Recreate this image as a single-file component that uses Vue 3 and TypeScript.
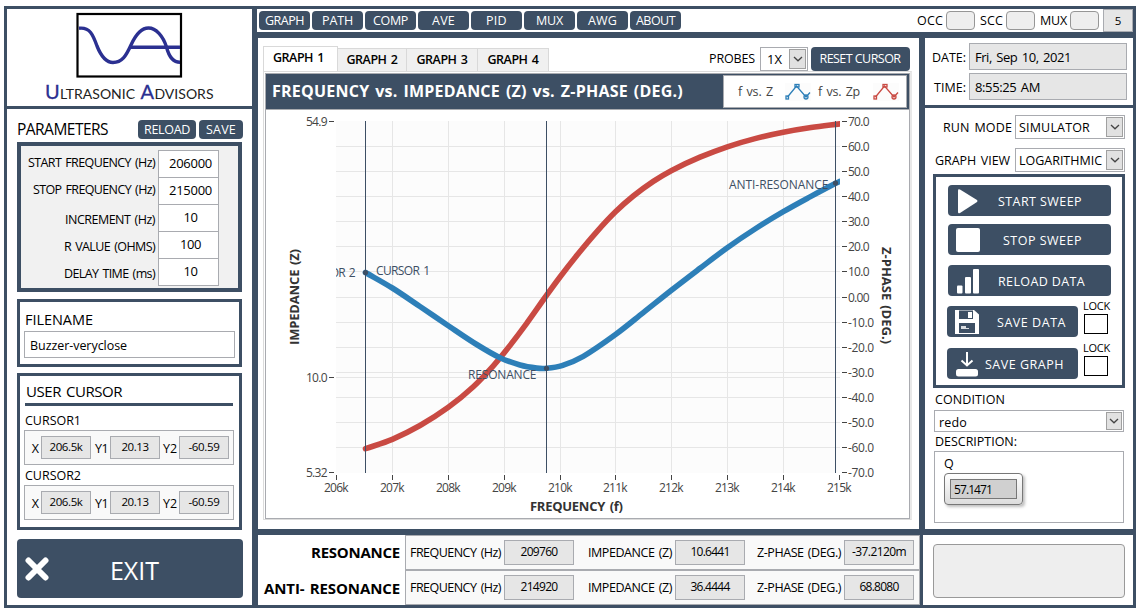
<script setup lang="ts">
type Point = [number, number]

// Spreads or tightens the letters of an element so its text takes the given width.
const vFit = {
  mounted(el: HTMLElement, binding: { value: number }) {
    const range = document.createRange()
    range.selectNodeContents(el)
    const width = range.getBoundingClientRect().width
    const count = (el.textContent ?? '').trim().length
    if (count > 1) el.style.letterSpacing = `${(binding.value - width) / count}px`
  },
}

const menu = [
  { name: 'GRAPH', w: 39 },
  { name: 'PATH', w: 31 },
  { name: 'COMP', w: 35 },
  { name: 'AVE', w: 23 },
  { name: 'PID', w: 21 },
  { name: 'MUX', w: 27 },
  { name: 'AWG', w: 29 },
  { name: 'ABOUT', w: 39 },
]
const lamps = [
  { name: 'OCC', w: 26 },
  { name: 'SCC', w: 23 },
  { name: 'MUX', w: 27 },
]
const params = [
  { label: 'START FREQUENCY (Hz)', w: 127, value: '206000', vw: 43, low: false },
  { label: 'STOP FREQUENCY (Hz)', w: 122, value: '215000', vw: 43, low: false },
  { label: 'INCREMENT (Hz)', w: 90, value: '10', vw: 14, low: true },
  { label: 'R VALUE (OHMS)', w: 91, value: '100', vw: 21, low: true },
  { label: 'DELAY TIME (ms)', w: 91, value: '10', vw: 14, low: true },
]
const cursors = ['CURSOR1', 'CURSOR2']
const readings = [
  { axis: 'X', value: '206.5k', w: 33, aw: 8 },
  { axis: 'Y1', value: '20.13', w: 27, aw: 13 },
  { axis: 'Y2', value: '-60.59', w: 31, aw: 14 },
]
const tabs = ['GRAPH 1', 'GRAPH 2', 'GRAPH 3', 'GRAPH 4']
const results = [
  { name: 'RESONANCE', w: 89, f: '209760', z: '10.6441', p: '-37.2120m', pw: 54 },
  { name: 'ANTI- RESONANCE', w: 136, f: '214920', z: '36.4444', p: '68.8080', pw: 39 },
]
const actions = [
  { id: 'play', name: 'START SWEEP', w: 84, lock: false },
  { id: 'stop', name: 'STOP SWEEP', w: 79, lock: false },
  { id: 'bars', name: 'RELOAD DATA', w: 87, lock: false },
  { id: 'disk', name: 'SAVE DATA', w: 69, lock: true },
  { id: 'down', name: 'SAVE GRAPH', w: 79, lock: true },
]

const gridX = [392, 448, 504, 560, 615, 671, 727, 783]
const gridY = [146, 171, 196, 221, 246, 271, 297, 322, 347, 372, 377, 397, 422, 447]
const ticksX = [336, 392, 448, 504, 560, 615, 671, 727, 783, 839].map((x, i) => ({ x, label: `${206 + i}k` }))
const ticksY = [121, 146, 171, 196, 221, 246, 271, 297, 322, 347, 372, 397, 422, 447, 472].map((y, i) => {
  const v = 70 - i * 10
  return { y, label: v === 0 ? '0.00' : v.toFixed(1) }
})
const ticksZ = [
  { y: 121, label: '54.9' },
  { y: 377, label: '10.0' },
  { y: 472, label: '5.32' },
]

const phase: Point[] = [
  [365.5, 448.7], [392.3, 439.3], [420, 425.5], [448.3, 407.3], [473.3, 386.7], [493.3, 365.8],
  [507, 349.3], [526.7, 323.3], [545, 297.5], [560, 277], [578, 254], [596.7, 231.8], [615.5, 211.8],
  [633.3, 196], [653.3, 181.4], [671.7, 170.4], [700, 157.2], [727.3, 146.8], [755, 138.6], [783.3, 132.3],
  [811, 127.6], [840, 123.9],
]
const impedance: Point[] = [
  [365.5, 272.5], [392.3, 288], [420, 306.5], [448.3, 325.7], [476.7, 344.5], [500, 357.7], [520, 365],
  [536.7, 368.1], [546.7, 368.3], [562, 365.6], [583.3, 356.3], [615.5, 334.5], [643.3, 312.6], [671.7, 290],
  [700, 268.3], [727.3, 247.7], [755, 229], [783.3, 211.7], [810, 196.9], [835.7, 183.3], [840, 181.3],
]

// Cubic through the points, with tangents taken from the slope around each one.
function smooth(p: Point[]): string {
  const slope = p.map((_, i) => {
    const a = p[Math.max(i - 1, 0)]
    const b = p[Math.min(i + 1, p.length - 1)]
    return (b[1] - a[1]) / (b[0] - a[0])
  })
  let d = `M${p[0][0]} ${p[0][1]}`
  for (let i = 0; i < p.length - 1; i++) {
    const [x0, y0] = p[i]
    const [x1, y1] = p[i + 1]
    const h = (x1 - x0) / 3
    d += `C${x0 + h} ${y0 + slope[i] * h} ${x1 - h} ${y1 - slope[i + 1] * h} ${x1} ${y1}`
  }
  return d
}
const phasePath = smooth(phase)
const impedancePath = smooth(impedance)
</script>

<template>
  <div class="frame">
    <aside class="left">
      <div class="brand">
        <svg width="245" height="97" viewBox="7 9 245 97">
          <rect x="77.5" y="14" width="103.5" height="62.5" fill="#fff" stroke="#000" stroke-width="2.2" />
          <g fill="none" stroke="#2b3091" stroke-width="3.4">
            <path d="M79 28.3C90 27 93 35 97 46C101 56 106 62.5 113 62.5C122 62.5 126 56 131 45C136 34 141 28 148.500 28C156 28 163 36 166.500 47C169 57 173 62.300 180 62.300" />
            <path d="M130 47.300H180" />
          </g>
          <g font-family="Lato, 'Open Sans', sans-serif" fill="#222">
            <text x="45" y="99" fill="#2b3091" stroke="#2b3091" stroke-width=".3" font-size="20">U</text>
            <text x="60" y="99" textLength="75" font-size="14">LTRASONIC</text>
            <text x="140.500" y="99" fill="#2b3091" stroke="#2b3091" stroke-width=".3" font-size="20">A</text>
            <text x="154.500" y="99" textLength="59" font-size="14">DVISORS</text>
          </g>
        </svg>
      </div>

      <div class="stack">
        <div class="params-head">
          <span v-fit="91" class="heading">PARAMETERS</span>
          <button class="btn reload"><span v-fit="46">RELOAD</span></button>
          <button class="btn save"><span v-fit="30">SAVE</span></button>
        </div>
        <div class="params">
          <div v-for="p in params" :key="p.label" class="param">
            <span v-fit="p.w" :class="p.low ? 'low' : 'high'">{{ p.label }}</span>
            <div class="param-value" :class="{ raised: !p.low }"><span v-fit="p.vw">{{ p.value }}</span></div>
          </div>
        </div>

        <div class="file">
          <span v-fit="68" class="heading">FILENAME</span>
          <div class="file-input"><span v-fit="97">Buzzer-veryclose</span></div>
        </div>

        <div class="user-cursor">
          <div class="cursor-title"><span v-fit="96" class="heading">USER CURSOR</span></div>
          <template v-for="c in cursors" :key="c">
            <div class="cursor-name"><span v-fit="56">{{ c }}</span></div>
            <div class="cursor-row">
              <template v-for="r in readings" :key="r.axis">
                <span class="axis"><span v-fit="r.aw">{{ r.axis }}</span></span>
                <div class="field reading"><span v-fit="r.w">{{ r.value }}</span></div>
              </template>
            </div>
          </template>
        </div>

        <button class="btn exit">
          <svg width="24" height="24" viewBox="0 0 24 24">
            <path d="M3.500 3.500L20.500 20.500M20.500 3.500L3.500 20.500" stroke="#fff" stroke-width="6" stroke-linecap="round" />
          </svg>
          <span v-fit="49">EXIT</span>
        </button>
      </div>
    </aside>

    <div class="right">
      <header class="toolbar">
        <button v-for="m in menu" :key="m.name" class="btn menu"><span v-fit="m.w">{{ m.name }}</span></button>
        <div class="lamps">
          <template v-for="l in lamps" :key="l.name">
            <span class="lamp-name"><span v-fit="l.w">{{ l.name }}</span></span>
            <i class="lamp"></i>
          </template>
          <div class="field count">5</div>
        </div>
      </header>

      <div class="middle">
        <main class="main">
          <div class="tabbar">
            <div v-for="(t, i) in tabs" :key="t" class="tab" :class="{ active: i === 0 }"><span v-fit="51">{{ t }}</span></div>
            <div class="tools">
              <span v-fit="46" class="probes">PROBES</span>
              <div class="select probe-select">
                <span v-fit="15">1X</span>
                <i class="arrow"><svg width="10" height="6" viewBox="0 0 10 6"><path d="M1 1L5 4.800L9 1" /></svg></i>
              </div>
              <button class="btn reset"><span v-fit="81">RESET CURSOR</span></button>
            </div>
          </div>
          <div class="pane">
            <div class="graph">
              <div class="graph-head">
                <span v-fit="411" class="graph-title">FREQUENCY vs. IMPEDANCE (Z) vs. Z-PHASE (DEG.)</span>
                <div class="legend">
                  <span v-fit="35">f vs. Z</span>
                  <svg width="26" height="18" viewBox="0 0 26 18" class="blue">
                    <path d="M2.500 14L11.500 3L21 14L25 9.500" /><rect x="1" y="13" width="2.500" height="3" /><rect x="10" y="1.500" width="4" height="2.500" /><circle cx="21" cy="14" r="2" />
                  </svg>
                  <span v-fit="42">f vs. Zp</span>
                  <svg width="26" height="18" viewBox="0 0 26 18" class="red">
                    <path d="M2.500 14L11.500 3L21 14L25 9.500" /><rect x="1" y="13" width="2.500" height="3" /><rect x="10" y="1.500" width="4" height="2.500" /><circle cx="21" cy="14" r="2" />
                  </svg>
                </div>
              </div>
              <svg class="plot" width="643" height="408" viewBox="266 110 643 408">
                <defs>
                  <clipPath id="area"><rect x="336" y="121" width="504" height="352" /></clipPath>
                </defs>
                <rect x="336" y="121" width="504" height="352" fill="#fcfcfc" />
                <g fill="#e6e6e6">
                  <rect v-for="x in gridX" :key="x" :x="x" y="121" width="1" height="352" />
                  <rect v-for="y in gridY" :key="y" x="336" :y="y" width="504" height="1" />
                </g>
                <g fill="#444">
                  <rect v-for="t in ticksX" :key="t.x" :x="t.x" y="475" width="1" height="5" />
                  <rect v-for="t in ticksY" :key="t.y" x="842" :y="t.y" width="5" height="1" />
                  <rect v-for="t in ticksZ" :key="t.y" x="329" :y="t.y" width="5" height="1" />
                </g>
                <g class="scale">
                  <text v-for="t in ticksX" :key="t.x" :x="t.x - 12" y="492" textLength="24.500">{{ t.label }}</text>
                  <text v-for="t in ticksY" :key="t.y" x="848" :y="t.y + 5" :textLength="t.label.length > 4 ? 26 : 21.500">{{ t.label }}</text>
                  <text v-for="t in ticksZ" :key="t.y" x="306" :y="t.y + 5" textLength="21.500">{{ t.label }}</text>
                </g>
                <g clip-path="url(#area)" fill="none" stroke-width="5.600" stroke-linecap="round">
                  <path :d="phasePath" stroke="#c94a43" />
                  <path :d="impedancePath" stroke="#2d7fb8" />
                </g>
                <g fill="#3d4f64">
                  <rect x="365" y="121" width="1" height="352" />
                  <rect x="546" y="121" width="1" height="352" />
                  <rect x="835" y="121" width="1" height="352" />
                  <circle cx="365.500" cy="272.500" r="2.600" />
                  <circle cx="546.500" cy="368.300" r="2.600" />
                  <circle cx="835.500" cy="183" r="2.600" />
                </g>
                <g class="notes" clip-path="url(#area)">
                  <text x="303" y="277" textLength="52.500">CURSOR 2</text>
                  <text x="376" y="275" textLength="54">CURSOR 1</text>
                  <text x="468" y="379" textLength="68.500">RESONANCE</text>
                  <text x="729" y="189" textLength="99.500">ANTI-RESONANCE</text>
                </g>
                <g class="titles">
                  <text x="530" y="511" textLength="93">FREQUENCY (f)</text>
                  <text transform="translate(299 345) rotate(-90)" textLength="96">IMPEDANCE (Z)</text>
                  <text transform="translate(882 247) rotate(90)" textLength="97">Z-PHASE (DEG.)</text>
                </g>
              </svg>
            </div>
          </div>
        </main>

        <aside class="side">
          <div class="clock">
            <div class="clock-row"><span class="clock-label"><span v-fit="34">DATE:</span></span><div class="field stamp"><span v-fit="96">Fri, Sep 10, 2021</span></div></div>
            <div class="clock-row"><span class="clock-label"><span v-fit="32">TIME:</span></span><div class="field stamp"><span v-fit="65">8:55:25 AM</span></div></div>
          </div>
          <div class="controls">
            <div class="mode">
              <span class="mode-label"><span v-fit="69">RUN MODE</span></span>
              <div class="select"><span v-fit="71">SIMULATOR</span><i class="arrow"><svg width="10" height="6" viewBox="0 0 10 6"><path d="M1 1L5 4.800L9 1" /></svg></i></div>
            </div>
            <div class="mode second">
              <span class="mode-label view"><span v-fit="75">GRAPH VIEW</span></span>
              <div class="select"><span v-fit="83">LOGARITHMIC</span><i class="arrow"><svg width="10" height="6" viewBox="0 0 10 6"><path d="M1 1L5 4.800L9 1" /></svg></i></div>
            </div>
            <div class="actions">
              <div v-for="a in actions" :key="a.id" class="action" :class="a.id">
                <button class="btn act">
                  <svg width="26" height="26" viewBox="0 0 26 26" fill="#fff">
                    <path v-if="a.id === 'play'" d="M3 2.500Q3 .5 5 1.500L22 12Q23 13 22 14L5 25Q3 26 3 24Z" />
                    <rect v-else-if="a.id === 'stop'" x="1" y="1" width="24" height="24" rx="2" />
                    <g v-else-if="a.id === 'bars'">
                      <rect x="2" y="17.500" width="5.500" height="8" rx="1" /><rect x="10" y="9" width="6" height="16.500" rx="1" /><rect x="18" y="1" width="6" height="24.500" rx="1" />
                    </g>
                    <g v-else-if="a.id === 'disk'">
                      <path d="M1 1H20L25 5.500V25H1Z" />
                      <path d="M5 1.500V10H19V1.500ZM5 14V24H21V14Z" fill="#3d4f64" />
                      <rect x="14" y="3" width="4" height="6" /><path d="M7 17H12V19H15V20H7Z" opacity=".8" />
                    </g>
                    <g v-else>
                      <rect x="2" y="18" width="22" height="7.500" rx="2.500" />
                      <path d="M13 1V14M7.500 9.500L13 14.500L18.500 9.500" fill="none" stroke="#fff" stroke-width="2" />
                    </g>
                  </svg>
                  <span v-fit="a.w">{{ a.name }}</span>
                </button>
                <div v-if="a.lock" class="lock"><span v-fit="27">LOCK</span><i></i></div>
              </div>
            </div>
            <div class="line condition"><span v-fit="70">CONDITION</span></div>
            <div class="select wide"><span v-fit="28">redo</span><i class="arrow"><svg width="10" height="6" viewBox="0 0 10 6"><path d="M1 1L5 4.800L9 1" /></svg></i></div>
            <div class="line"><span v-fit="82">DESCRIPTION:</span></div>
            <div class="description">
              <span class="q">Q</span>
              <div class="gauge"><div class="gauge-face"><span v-fit="38">57.1471</span></div></div>
            </div>
          </div>
        </aside>
      </div>

      <footer class="bottom">
        <div class="results">
          <div v-for="r in results" :key="r.name" class="result">
            <span class="result-name"><span v-fit="r.w">{{ r.name }}</span></span>
            <div class="result-row">
              <span class="rl"><span v-fit="91">FREQUENCY (Hz)</span></span>
              <div class="field out"><span v-fit="37">{{ r.f }}</span></div>
              <span class="rl rz"><span v-fit="84">IMPEDANCE (Z)</span></span>
              <div class="field out"><span v-fit="39">{{ r.z }}</span></div>
              <span class="rl rp"><span v-fit="84">Z-PHASE (DEG.)</span></span>
              <div class="field out"><span v-fit="r.pw">{{ r.p }}</span></div>
            </div>
          </div>
        </div>
        <div class="message"><div class="message-box"></div></div>
      </footer>
    </div>
  </div>
</template>

<style>
html, body { background: #fff; overflow: hidden; }
</style>

<style scoped>
* { box-sizing: border-box; }
.frame {
  display: flex;
  gap: 5px;
  width: 1132px;
  height: 602px;
  margin: 6px 0 0 4px;
  padding: 3px;
  background: #3d4f64;
  color: #000;
  font: 12.5px/16px "Open Sans", "Noto Sans", sans-serif;
  white-space: nowrap;
  word-spacing: 1.5px;
}
svg { display: block; flex: none; }
.btn {
  display: flex;
  align-items: center;
  justify-content: center;
  padding: 0;
  border: 0;
  border-radius: 4px;
  background: #3d4f64;
  color: #fff;
  font: 500 12.5px/16px "Open Sans", "Noto Sans", sans-serif;
  white-space: nowrap;
}
.field {
  display: flex;
  align-items: center;
  justify-content: center;
  border: 1px solid #a9abb0;
  background: #e6e6e6;
}
.heading { font-size: 15px; line-height: 20px; }

/* left column */
.left { display: flex; flex-direction: column; gap: 3px; width: 245px; flex: none; }
.brand { height: 97px; background: #fff; }
.stack { flex: 1; padding: 11px 9px 0 10px; background: #fff; }
.params-head { display: flex; height: 22px; }
.params-head .heading { width: 121px; font-size: 15.5px; line-height: 18px; }
.params-head .btn { height: 19px; }
.reload { width: 58px; }
.save { width: 44px; margin-left: 3px; }
.params { width: 225px; height: 150px; padding: 4px 0 0 0; border: 4px solid #3d4f64; background: #f1f1f1; }
.param { display: flex; align-items: center; justify-content: flex-end; height: 27px; padding-right: 19px; }
.param .low { margin-top: 4px; }
.param .high { margin-bottom: 2px; }
.param-value {
  display: flex;
  align-items: center;
  justify-content: center;
  width: 61px;
  height: 28px;
  margin: 0 0 0 3px;
  padding: 0 0 2px 4px;
  border: 1px solid #a9abb0;
  background: #fff;
  font-size: 13px;
}
.param-value.raised { padding-bottom: 1px; }
.file { width: 225px; height: 68px; margin-top: 7px; padding: 8px 4px 0 4px; border: 3px solid #3d4f64; }
.file .heading { display: block; padding-left: 1px; font-size: 14.5px; }
.file-input { width: 211px; height: 27px; margin-top: 1px; padding: 6px 5px 4px; border: 1px solid #a9abb0; }
.user-cursor { width: 225px; height: 157px; margin-top: 6px; padding: 5px 4px 0; border: 3px solid #3d4f64; }
.cursor-title { width: 208px; height: 25px; margin-left: 1px; padding-left: 1px; border-bottom: 3px solid #3d4f64; }
.cursor-title .heading { font-size: 15px; }
.cursor-name { height: 24px; padding: 7px 0 0 1px; }
.cursor-row + .cursor-name { height: 20px; padding-top: 3px; }
.cursor-row { display: flex; align-items: center; width: 210px; height: 35px; border: 1px solid #a9abb0; background: #f9f9f9; }
.axis { display: flex; justify-content: flex-end; width: 16px; padding: 2px 2px 0 0; }
.reading + .axis { width: 19px; }
.reading { width: 50px; height: 23px; padding-bottom: 1px; font-size: 11.5px; }
.exit { width: 226px; height: 59px; margin-top: 9px; padding-left: 8px; justify-content: flex-start; }
.exit span { margin: 2px 0 0 61px; font-size: 25px; line-height: 32px; font-weight: 500; }

/* right block */
.right { display: flex; flex-direction: column; gap: 6px; width: 876px; }
.toolbar { display: flex; align-items: center; gap: 2px; height: 23px; padding-left: 2px; background: #fff; }
.menu { width: 51px; height: 19px; }
.lamps { display: flex; align-items: center; margin-left: auto; }
.lamp-name { width: 29px; }
.lamp { width: 29px; height: 19px; margin-right: 5px; border: 1px solid #969696; border-radius: 4px; background: #eee; }
.lamp + .lamp-name { width: 26px; }
.lamp-name:nth-of-type(3) { width: 30px; }
.count { width: 30px; height: 23px; margin-left: -1px; font-size: 11.5px; }
.middle { display: flex; gap: 6px; height: 491px; padding-left: 1px; }
.main { width: 661px; padding: 8px 0 0 5px; background: #fff; }
.tabbar { display: flex; align-items: flex-end; height: 25px; }
.tab {
  display: flex;
  align-items: center;
  justify-content: center;
  width: 71px;
  height: 23px;
  border: 1px solid #d9d9d9;
  border-width: 1px 1px 0 0;
  background: #f0f0f0;
  font-weight: 600;
}
.tab.active { width: 75px; height: 25px; padding: 0 4px 2px 0; border-left-width: 1px; background: #fff; }
.tab:nth-child(2) { width: 69px; }
.tools { display: flex; align-items: center; margin-left: auto; padding-right: 9px; height: 25px; }
.probes { margin-right: 5px; }
.select { display: flex; align-items: center; width: 110px; height: 24px; padding: 1px 1px 1px 4px; border: 1px solid #a9abb0; background: #fff; }
.arrow { display: flex; align-items: center; justify-content: center; width: 17px; height: 20px; margin-left: auto; border: 1px solid #a0a0a0; background: #e1e1e1; }
.arrow path { fill: none; stroke: #444; stroke-width: 1.3; }
.probe-select { width: 48px; padding-left: 6px; margin-right: 3px; font-size: 13px; }
.reset { width: 99px; height: 24px; padding-right: 1px; }
.pane { width: 649px; height: 449px; padding: 1px 0 0 1px; border: 1px solid #dcdcdc; border-right: 2px solid #e8e8e8; }
.graph { width: 645px; height: 446px; border: 1px solid #a9abb0; }
.graph-head { display: flex; align-items: center; width: 643px; height: 36px; padding: 0 2px 0 6px; border-bottom: 1px solid #a9abb0; background: #3d4f64; }
.graph-title { margin-bottom: 2px; color: #fff; font-size: 16px; font-weight: 700; }
.legend { display: flex; align-items: center; width: 184px; height: 33px; margin-left: auto; padding-left: 14px; border: 1px solid #a9abb0; background: #fff; color: #444; }
.legend svg { margin: 0 7px 0 12px; fill: none; stroke-width: 1.3; background: #fcfcfc; }
.legend .red { margin-left: 13px; }
.blue { stroke: #2d7fb8; }
.red { stroke: #c94a43; }
.plot text { font-family: "Open Sans", "Noto Sans", sans-serif; }
.scale { font-size: 12px; fill: #444; }
.notes { font-size: 12px; fill: #3d4f64; }
.titles { font-size: 13px; font-weight: 700; fill: #333; }

/* side column */
.side { display: flex; flex-direction: column; gap: 3px; width: 208px; }
.clock { height: 67px; padding: 5px 6px 0 0; background: #fff; }
.clock-row { display: flex; align-items: center; justify-content: flex-end; height: 27px; margin-bottom: 3px; }
.clock-label { margin: 3px 3px 0 0; }
.stamp { width: 158px; justify-content: flex-start; padding-left: 5px; font-size: 13px; }
.clock-row .stamp { height: 27px; }
.controls { flex: 1; padding: 7px 8px 0; background: #fff; }
.mode { display: flex; align-items: center; justify-content: flex-end; height: 24px; }
.mode.second { margin-top: 9px; }
.mode-label { margin: 2px 3px 0 0; }
.mode-label.view { margin-right: 5px; }
.mode .select { padding: 1px 1px 1px 3px; }
.mode .select span { margin-top: 2px; }
.actions { width: 192px; height: 214px; margin-top: 2px; padding: 8px 0 0 12px; border: 3px solid #3d4f64; }
.action { display: flex; height: 31px; }
.act { width: 163px; height: 31px; padding-left: 7px; justify-content: flex-start; font-size: 12.5px; }
.act span { margin: 3px 0 0 17px; }
.stop { margin-top: 8px; }
.stop span { margin-left: 22px; }
.bars { margin-top: 10px; }
.disk { margin: 10px 0 0 -1px; }
.down { margin: 11px 0 0 -1px; }
.disk .act, .down .act { width: 131px; }
.down .act span { margin-left: 5px; }
.lock { width: 27px; margin: -8px 0 0 5px; font-size: 11px; }
.lock span { display: block; margin: 0; }
.lock i { display: block; width: 24px; height: 20px; margin-left: 1px; border: 1px solid #000; }
.line { height: 19px; padding: 2px 0 0 2px; }
.condition { height: 22px; padding-top: 4px; }
.select.wide { width: 190px; height: 22px; margin-left: 1px; }
.wide span { margin-top: 3px; }
.wide .arrow { height: 18px; width: 16px; }
.description { width: 190px; height: 72px; margin-left: 1px; padding: 3px 0 0 9px; border: 1px solid #a9abb0; }
.q { display: block; line-height: 18px; }
.gauge {
  width: 79px;
  height: 32px;
  padding: 5px;
  border: 1px solid #777;
  border-radius: 4px;
  background: linear-gradient(#fff, #ddd);
  box-shadow: 2px 2px 3px rgba(0, 0, 0, .25);
}
.gauge-face { width: 67px; height: 20px; padding: 2px 0 0 3px; border: 1px solid #777; background: #d0d0d0; font-size: 12px; }

/* bottom row */
.bottom { display: flex; gap: 3px; height: 70px; padding-left: 1px; }
.results { width: 662px; background: #fff; }
.result { display: flex; height: 35px; }
.result-name { display: flex; align-items: center; justify-content: flex-end; width: 147px; padding: 0 5px 2px 0; font-size: 15px; font-weight: 700; }
.result + .result .result-name { padding-bottom: 0; }
.result-row { display: flex; align-items: center; width: 515px; border: 1px solid #a9abb0; background: #f9f9f9; }
.rl { width: 98px; padding: 1px 0 0 4px; }
.rz { width: 101px; padding-left: 14px; }
.rp { width: 99px; padding-left: 12px; }
.out { width: 70px; height: 25px; padding-bottom: 1px; font-size: 12px; }
.message { flex: 1; padding: 9px 8px 0 10px; background: #fff; }
.message-box { height: 54px; border: 1px solid #999; border-radius: 4px; background: #eee; }
</style>
